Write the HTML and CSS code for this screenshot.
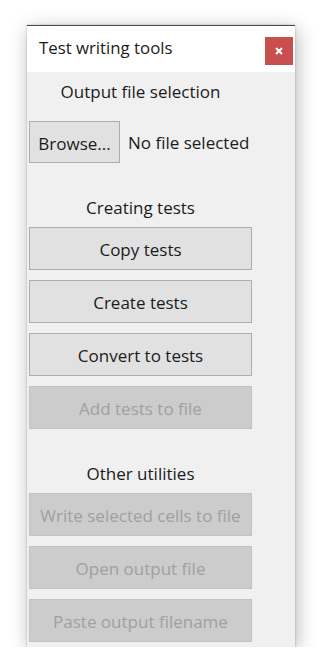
FILE: index.html
```html
<!DOCTYPE html>
<html>
<head>
<meta charset="utf-8">
<link rel="stylesheet" href="styles.css">
</head>
<body>
<div class="window">
  <div class="titlebar">
    <span class="title">Test writing tools</span>
    <button class="close" aria-label="Close">
      <svg width="8" height="8" viewBox="0 0 8 8"><path d="M1 1L7 7M7 1L1 7" stroke="#fff" stroke-width="2"/></svg>
    </button>
  </div>
  <div class="content">
    <div class="label first">Output file selection</div>
    <div class="file-row">
      <button class="btn browse">Browse...</button>
      <span class="file-name">No file selected</span>
    </div>
    <div class="label section">Creating tests</div>
    <div class="group">
      <button class="btn wide">Copy tests</button>
      <button class="btn wide">Create tests</button>
      <button class="btn wide">Convert to tests</button>
      <button class="btn wide" disabled>Add tests to file</button>
    </div>
    <div class="label section">Other utilities</div>
    <div class="group">
      <button class="btn wide" disabled>Write selected cells to file</button>
      <button class="btn wide" disabled>Open output file</button>
      <button class="btn wide" disabled>Paste output filename</button>
    </div>
  </div>
</div>
</body>
</html>
```

FILE: styles.css
```css
html, body {
  margin: 0;
  padding: 0;
  background: #ffffff;
}
body {
  font-family: "Open Sans", "Noto Sans", sans-serif;
  font-size: 17px;
  color: #1b1b1b;
}
.window {
  margin: 25px 0 0 27px;
  width: 268px;
  height: 622px;
  box-sizing: border-box;
  background: #f0f0f0;
  border-top: 1px solid #4a4a4a;
  box-shadow: 0 0 2px rgba(0,0,0,0.25), 2px 4px 18px rgba(0,0,0,0.28);
  display: flex;
  flex-direction: column;
}
.titlebar {
  height: 46px;
  background: #ffffff;
  display: flex;
  align-items: flex-start;
  justify-content: space-between;
  padding: 0 2px 0 12px;
}
.title {
  margin-top: 11px;
  line-height: 22px;
  font-size: 16.8px;
}
.close {
  margin-top: 11px;
  width: 28px;
  height: 28px;
  border: none;
  padding: 0;
  background: #c94f4f;
  display: flex;
  align-items: center;
  justify-content: center;
}
.content {
  padding: 0 0 0 2px;
  display: flex;
  flex-direction: column;
}
.label {
  width: 223px;
  text-align: center;
  line-height: 20px;
  height: 20px;
}
.label.first {
  margin-top: 10px;
}
.label.section {
  margin-top: 35px;
}
.file-row {
  margin-top: 19px;
  display: flex;
  align-items: center;
  gap: 8px;
}
.btn {
  font-family: inherit;
  font-size: 17px;
  color: #1b1b1b;
  background: #e1e1e1;
  border: 1px solid #adadad;
  box-sizing: border-box;
  padding: 2px 0 0 0;
  margin: 0;
}
.btn:disabled {
  background: #cccccc;
  border-color: #c2c2c2;
  color: #a0a0a0;
}
.browse {
  width: 91px;
  height: 42px;
}
.group {
  margin-top: 9px;
  display: flex;
  flex-direction: column;
  gap: 10px;
}
.wide {
  width: 223px;
  height: 43px;
}
```
